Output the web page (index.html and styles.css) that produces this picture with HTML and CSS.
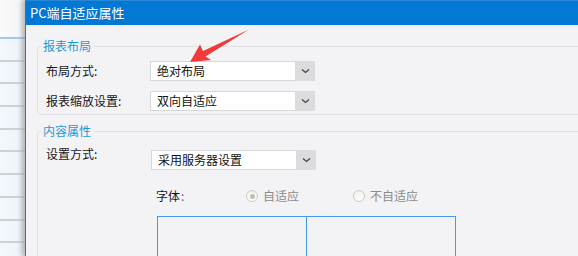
FILE: index.html
```html
<!DOCTYPE html>
<html>
<head>
<meta charset="utf-8">
<link rel="stylesheet" href="styles.css">
</head>
<body>
<div class="screen">
  <div class="behind">
    <div class="behind-top"></div>
    <div class="behind-row"></div>
    <div class="behind-row"></div>
    <div class="behind-row"></div>
    <div class="behind-row"></div>
    <div class="behind-row"></div>
    <div class="behind-row"></div>
    <div class="behind-row"></div>
    <div class="behind-row"></div>
    <div class="behind-row"></div>
  </div>
  <div class="dialog">
    <div class="titlebar">PC端自适应属性</div>
    <div class="content">
      <fieldset class="group group-layout">
        <legend>报表布局</legend>
        <div class="row">
          <span class="label">布局方式:</span>
          <div class="select"><span class="select-text">绝对布局</span><span class="select-btn"><svg width="9" height="6" viewBox="0 0 9 6"><path d="M1 1.5 L4.5 4.5 L8 1.5" fill="none" stroke="#444" stroke-width="1.3"/></svg></span></div>
        </div>
        <div class="row">
          <span class="label">报表缩放设置:</span>
          <div class="select"><span class="select-text">双向自适应</span><span class="select-btn"><svg width="9" height="6" viewBox="0 0 9 6"><path d="M1 1.5 L4.5 4.5 L8 1.5" fill="none" stroke="#444" stroke-width="1.3"/></svg></span></div>
        </div>
      </fieldset>
      <fieldset class="group group-content">
        <legend>内容属性</legend>
        <div class="row row-top">
          <span class="label label-up">设置方式:</span>
          <div class="select"><span class="select-text">采用服务器设置</span><span class="select-btn"><svg width="9" height="6" viewBox="0 0 9 6"><path d="M1 1.5 L4.5 4.5 L8 1.5" fill="none" stroke="#444" stroke-width="1.3"/></svg></span></div>
        </div>
        <div class="font-row">
          <span class="font-label">字体<span class="colon">:</span></span>
          <span class="radio radio-checked"><span class="radio-circle"><span class="radio-dot"></span></span>自适应</span>
          <span class="radio"><span class="radio-circle"></span>不自适应</span>
        </div>
        <div class="preview">
          <div class="preview-cell"></div>
          <div class="preview-cell preview-cell-right"></div>
        </div>
      </fieldset>
    </div>
  </div>
  <svg class="arrow" width="578" height="256" viewBox="0 0 578 256">
    <polygon points="190,62 200,44.5 203,51 249,29.5 205.5,56.5 211,60" fill="#f23a3a"/>
  </svg>
</div>
</body>
</html>
```

FILE: styles.css
```css
* { box-sizing: border-box; }
html, body {
  margin: 0;
  padding: 0;
  width: 578px;
  height: 256px;
  overflow: hidden;
  background: #f3f3f6;
}
.screen {
  position: relative;
  display: flex;
  width: 578px;
  height: 256px;
  overflow: hidden;
  font-family: "Noto Sans CJK SC", "Noto Sans", sans-serif;
  font-size: 12px;
  color: #161616;
}
.behind {
  width: 25px;
  flex: none;
  background: linear-gradient(to right, #f3f8fd 0%, #eef4fa 70%, #d9dde2 100%);
}
.behind-top {
  height: 39px;
  background: linear-gradient(to right, #fbfbfc 0%, #f4f5f6 75%, #dcdee0 100%);
  border-bottom: 2px solid #a6c6ec;
}
.behind-row {
  height: 22.7px;
  border-bottom: 2px solid #cfd0d2;
}
.dialog {
  flex: 1;
  min-width: 0;
  display: flex;
  flex-direction: column;
  border-left: 1px solid #4d6f96;
  box-shadow: -3px 0 5px rgba(0, 0, 0, 0.18);
  background: #f3f3f6;
}
.titlebar {
  height: 26px;
  background: #0078d4;
  border-top: 1px solid #2a86d6;
  color: #ffffff;
  font-size: 13px;
  line-height: 24px;
  padding-left: 4px;
  white-space: nowrap;
}
.content {
  padding-left: 11px;
}
.group {
  margin: 0 -30px 0 0;
  padding: 0 0 0 8px;
  border: 1px solid #e1e1e4;
  border-radius: 4px;
  min-width: 0;
}
.group legend {
  margin-left: -5px;
  padding: 0 2px;
  font-size: 12px;
  line-height: 14px;
  color: #1b9ad8;
}
.group-layout {
  margin-top: 14px;
  padding-top: 8px;
  padding-bottom: 3px;
}
.group-content {
  margin-top: 9px;
  padding-top: 12px;
  height: 200px;
}
.row {
  display: flex;
  align-items: center;
  height: 20px;
}
.row + .row {
  margin-top: 10px;
}
.row-top {
  align-items: flex-start;
}
.label {
  width: 104px;
  flex: none;
  line-height: 14px;
  white-space: nowrap;
}
.label-up {
  margin-top: -3px;
}
.row-top .select {
  margin-left: 1px;
}
.select {
  width: 165px;
  height: 20px;
  display: flex;
  background: #ffffff;
  border: 1px solid #d7d7da;
}
.select-text {
  flex: 1;
  padding-left: 6px;
  line-height: 18px;
  font-size: 12px;
  color: #111;
  white-space: nowrap;
}
.select-btn {
  width: 20px;
  margin: -1px -1px -1px 0;
  background: #dcdcdf;
  display: flex;
  align-items: center;
  justify-content: center;
}
.font-row {
  display: flex;
  align-items: center;
  height: 14px;
  margin-top: 19px;
  padding-left: 110px;
  line-height: 14px;
}
.font-label {
  width: 90px;
  flex: none;
}
.colon {
  color: #7a4b8c;
  margin-left: 1px;
}
.radio {
  display: flex;
  align-items: center;
  color: #8a8a8a;
  width: 107px;
  flex: none;
  white-space: nowrap;
}
.radio-circle {
  width: 12px;
  height: 12px;
  border-radius: 50%;
  border: 1px solid #cbcbc3;
  background: linear-gradient(#f0f0ee, #ffffff);
  margin-right: 5px;
  display: flex;
  align-items: center;
  justify-content: center;
}
.radio-dot {
  width: 5px;
  height: 5px;
  border-radius: 50%;
  background: #bdbdb6;
}
.preview {
  display: flex;
  margin-top: 13px;
  margin-left: 111px;
  width: 299px;
  height: 60px;
  border: 1px solid #4298f2;
}
.preview-cell {
  width: 148px;
  flex: none;
}
.preview-cell-right {
  flex: 1;
  border-left: 1px solid #4298f2;
}
.arrow {
  position: absolute;
  left: 0;
  top: 0;
  pointer-events: none;
}
```
